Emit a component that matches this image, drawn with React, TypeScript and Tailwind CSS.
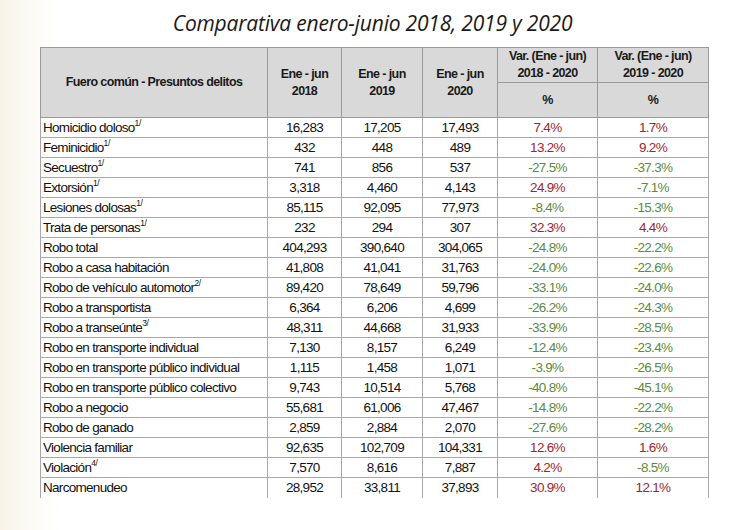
import React from "react";

type Row = {
  name: string;
  note?: string;
  a: string;
  b: string;
  c: string;
  v1: string;
  v2: string;
};

const ROWS: Row[] = [
  { name: "Homicidio doloso", note: "1/", a: "16,283", b: "17,205", c: "17,493", v1: "7.4%", v2: "1.7%" },
  { name: "Feminicidio", note: "1/", a: "432", b: "448", c: "489", v1: "13.2%", v2: "9.2%" },
  { name: "Secuestro", note: "1/", a: "741", b: "856", c: "537", v1: "-27.5%", v2: "-37.3%" },
  { name: "Extorsión", note: "1/", a: "3,318", b: "4,460", c: "4,143", v1: "24.9%", v2: "-7.1%" },
  { name: "Lesiones dolosas", note: "1/", a: "85,115", b: "92,095", c: "77,973", v1: "-8.4%", v2: "-15.3%" },
  { name: "Trata de personas", note: "1/", a: "232", b: "294", c: "307", v1: "32.3%", v2: "4.4%" },
  { name: "Robo total", a: "404,293", b: "390,640", c: "304,065", v1: "-24.8%", v2: "-22.2%" },
  { name: "Robo a casa habitación", a: "41,808", b: "41,041", c: "31,763", v1: "-24.0%", v2: "-22.6%" },
  { name: "Robo de vehículo automotor", note: "2/", a: "89,420", b: "78,649", c: "59,796", v1: "-33.1%", v2: "-24.0%" },
  { name: "Robo a transportista", a: "6,364", b: "6,206", c: "4,699", v1: "-26.2%", v2: "-24.3%" },
  { name: "Robo a transeúnte", note: "3/", a: "48,311", b: "44,668", c: "31,933", v1: "-33.9%", v2: "-28.5%" },
  { name: "Robo en transporte individual", a: "7,130", b: "8,157", c: "6,249", v1: "-12.4%", v2: "-23.4%" },
  { name: "Robo en transporte público individual", a: "1,115", b: "1,458", c: "1,071", v1: "-3.9%", v2: "-26.5%" },
  { name: "Robo en transporte público colectivo", a: "9,743", b: "10,514", c: "5,768", v1: "-40.8%", v2: "-45.1%" },
  { name: "Robo a negocio", a: "55,681", b: "61,006", c: "47,467", v1: "-14.8%", v2: "-22.2%" },
  { name: "Robo de ganado", a: "2,859", b: "2,884", c: "2,070", v1: "-27.6%", v2: "-28.2%" },
  { name: "Violencia familiar", a: "92,635", b: "102,709", c: "104,331", v1: "12.6%", v2: "1.6%" },
  { name: "Violación", note: "4/", a: "7,570", b: "8,616", c: "7,887", v1: "4.2%", v2: "-8.5%" },
  { name: "Narcomenudeo", a: "28,952", b: "33,811", c: "37,893", v1: "30.9%", v2: "12.1%" },
];

const tone = (v: string) => (v.startsWith("-") ? "text-[#5b8a3c]" : "text-[#a1262c]");

export default function App() {
  return (
    <div className="w-[745px] h-[530px] overflow-hidden bg-[linear-gradient(90deg,#f8f2e6_0px,#fcfaf4_28px,#ffffff_60px)] font-['Liberation_Sans',Arial,sans-serif] text-[#111]">
      <h1 className="h-[47px] pt-[8px] text-center font-['Open_Sans',sans-serif] italic text-[21px] leading-[30px] tracking-[-0.2px] text-[#1a1a1a]">
        Comparativa enero-junio 2018, 2019 y 2020
      </h1>

      <table className="ml-[40px] w-[668px] table-fixed border-collapse border border-b-0 border-[#8f8f8f]">
        <colgroup>
          <col className="w-[227px]" />
          <col className="w-[74px]" />
          <col className="w-[81px]" />
          <col className="w-[75px]" />
          <col className="w-[100px]" />
          <col className="w-[111px]" />
        </colgroup>
        <thead className="bg-[#d9d9d9] text-[12.5px] font-bold leading-[17px] tracking-[-0.6px] text-[#1a1a1a]">
          <tr className="h-[35px]">
            <th rowSpan={2} className="border border-[#9a9a9a] font-bold">
              Fuero común - Presuntos delitos
            </th>
            <th rowSpan={2} className="border border-[#9a9a9a] font-bold">
              Ene - jun
              <br />
              2018
            </th>
            <th rowSpan={2} className="border border-[#9a9a9a] font-bold">
              Ene - jun
              <br />
              2019
            </th>
            <th rowSpan={2} className="border border-[#9a9a9a] font-bold">
              Ene - jun
              <br />
              2020
            </th>
            <th className="border border-[#9a9a9a] font-bold">
              Var. (Ene - jun)
              <br />
              2018 - 2020
            </th>
            <th className="border border-[#9a9a9a] font-bold">
              Var. (Ene - jun)
              <br />
              2019 - 2020
            </th>
          </tr>
          <tr className="h-[35px]">
            <th className="border border-[#9a9a9a] font-bold">%</th>
            <th className="border border-[#9a9a9a] font-bold">%</th>
          </tr>
        </thead>
        <tbody className="text-[13.5px] leading-[19px] tracking-[-0.7px]">
          {ROWS.map((r, i) => {
            const last = i === ROWS.length - 1;
            const cell = last ? "border border-b-0 border-[#a8a8a8]" : "border border-[#a8a8a8]";
            return (
              <tr key={r.name} className="h-[20px]">
                <td className={`${cell} pl-[2px] whitespace-nowrap`}>
                  {r.name}
                  {r.note && (
                    <sup className="text-[8.5px] tracking-[-0.4px] relative -top-[6px]">{r.note}</sup>
                  )}
                </td>
                <td className={`${cell} text-center`}>{r.a}</td>
                <td className={`${cell} text-center`}>{r.b}</td>
                <td className={`${cell} text-center`}>{r.c}</td>
                <td className={`${cell} text-center ${tone(r.v1)}`}>{r.v1}</td>
                <td className={`${cell} text-center ${tone(r.v2)}`}>{r.v2}</td>
              </tr>
            );
          })}
        </tbody>
      </table>
    </div>
  );
}
